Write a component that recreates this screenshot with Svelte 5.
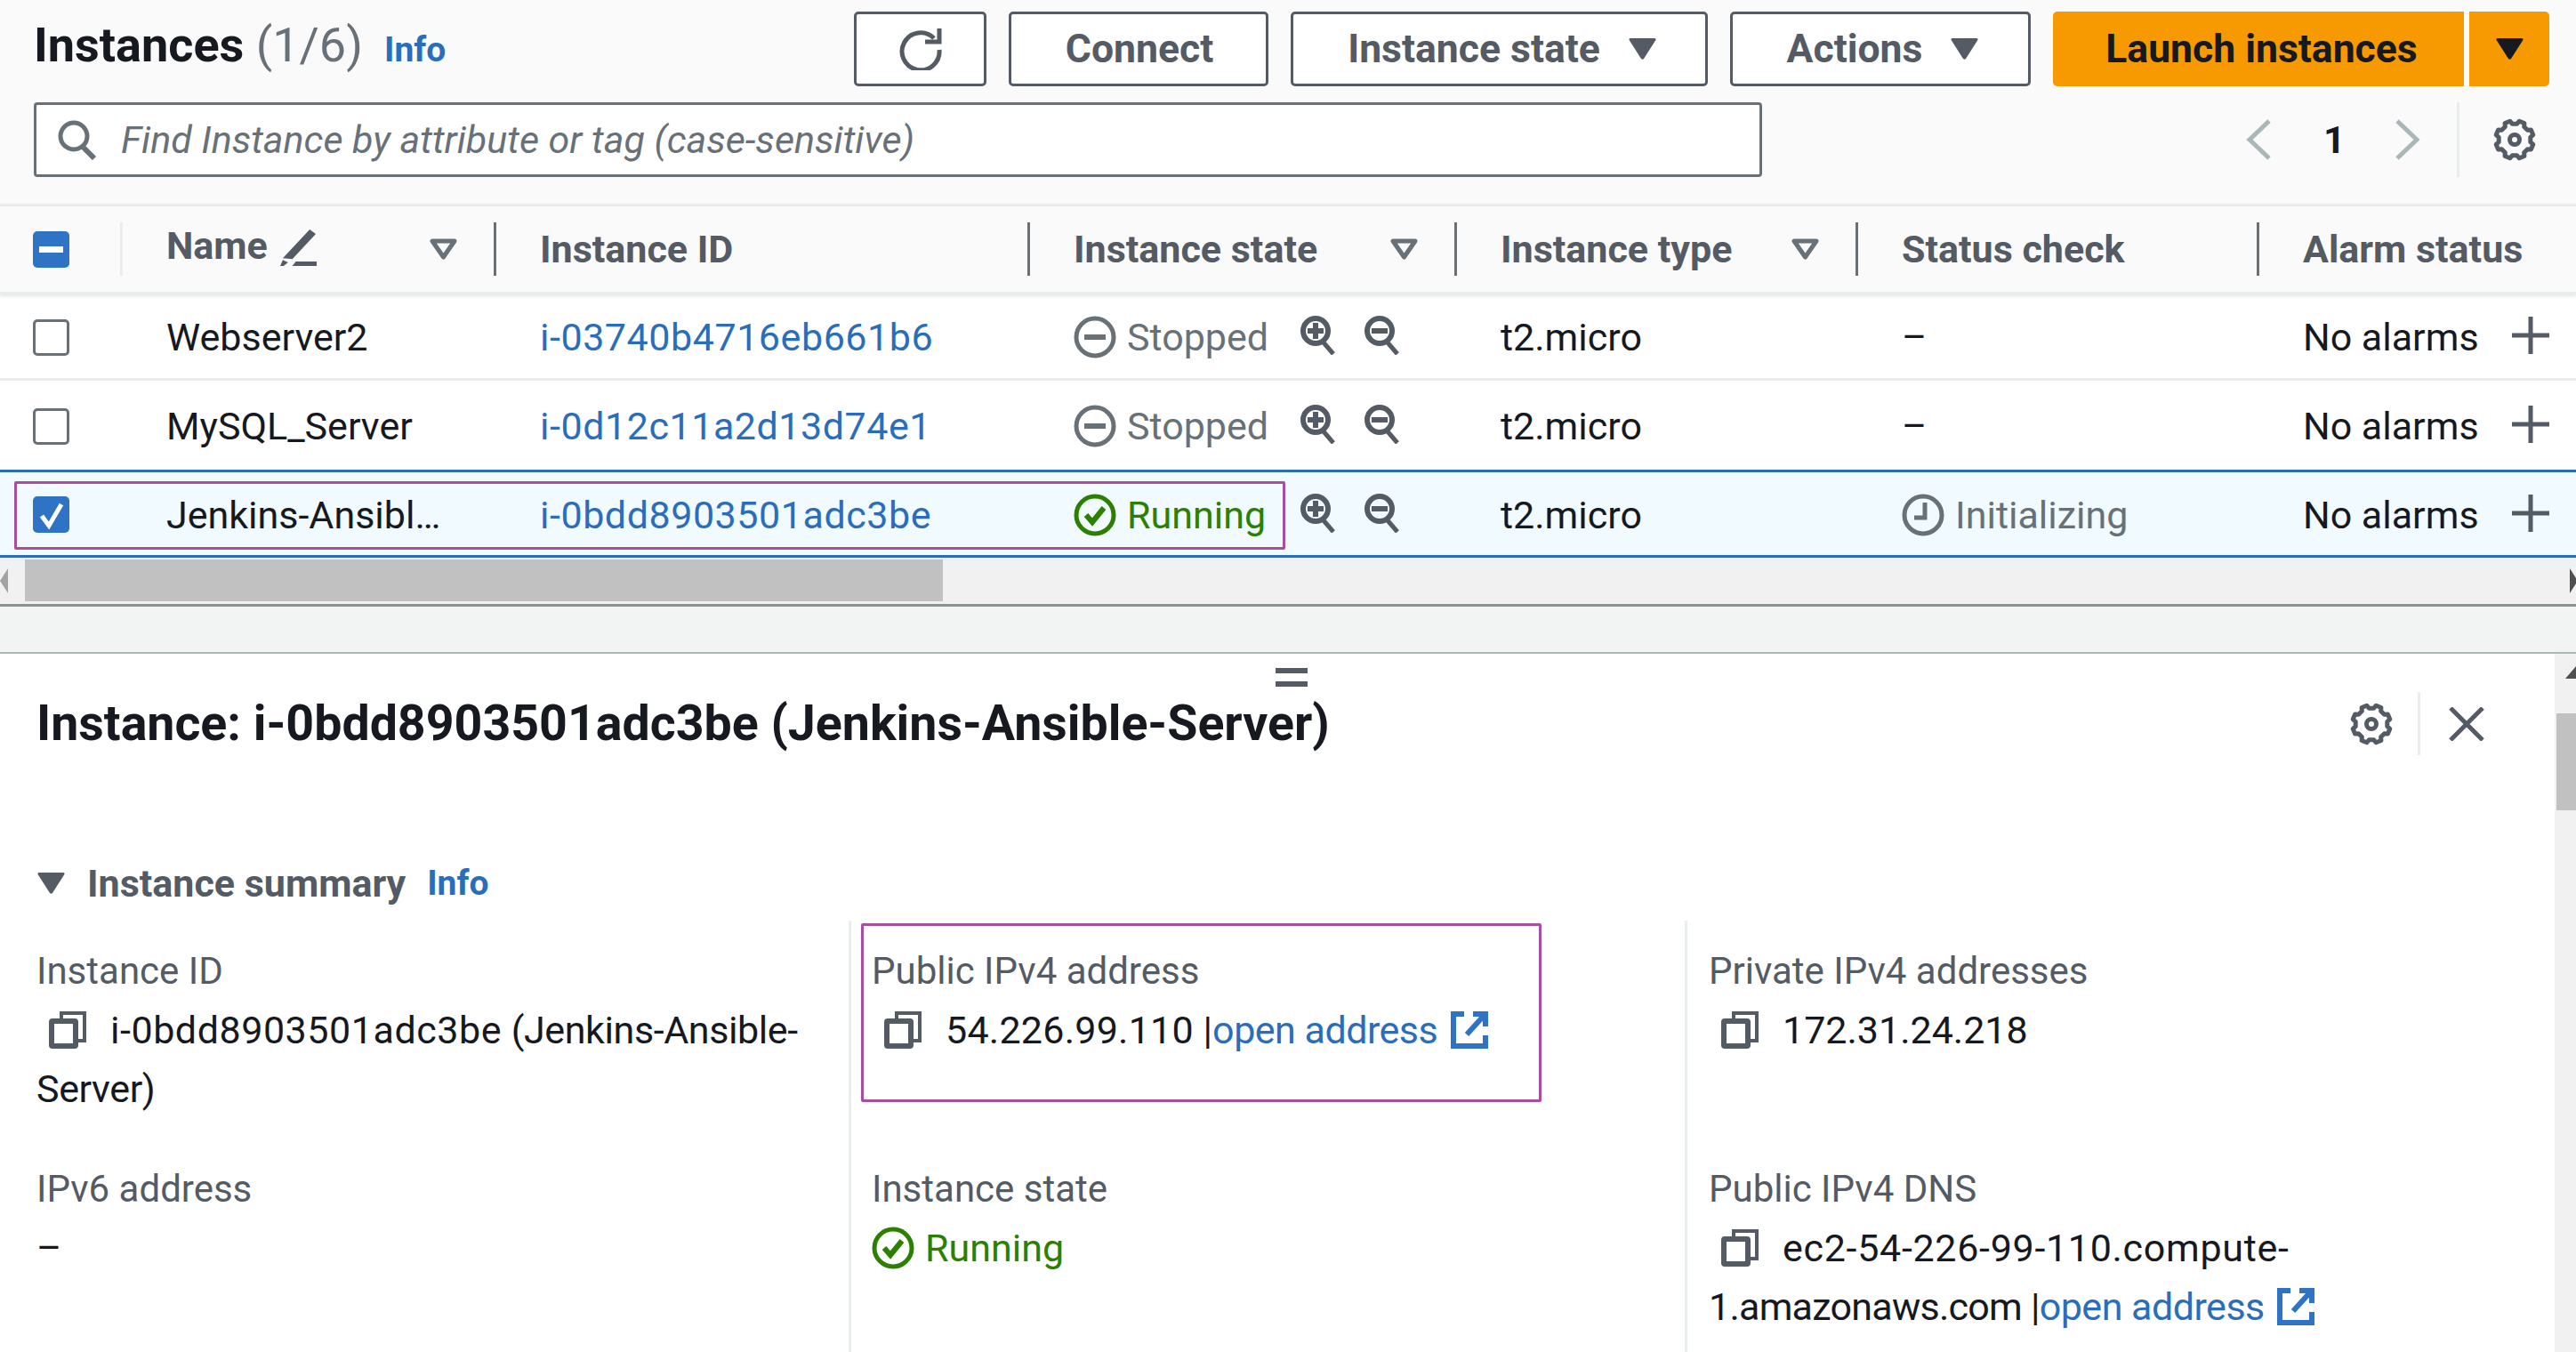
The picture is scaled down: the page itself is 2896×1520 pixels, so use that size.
<script>
  const gearPath = (() => {
    const cx = 24, cy = 24, n = 8;
    const pts = [];
    for (let i = 0; i < n; i++) {
      const a = (i * 2 * Math.PI) / n - Math.PI / 8;
      const d = Math.PI / n;
      [[18, -0.62 * d], [21.5, -0.36 * d], [21.5, 0.36 * d], [18, 0.62 * d]].forEach(([r, o]) => {
        pts.push(`${(cx + r * Math.cos(a + o)).toFixed(1)} ${(cy + r * Math.sin(a + o)).toFixed(1)}`);
      });
    }
    return 'M' + pts.join('L') + 'Z';
  })();
  const rows = [
    { name: 'Webserver2', id: 'i-03740b4716eb661b6', state: 'stopped', status: '–', cls: 'r1' },
    { name: 'MySQL_Server', id: 'i-0d12c11a2d13d74e1', state: 'stopped', status: '–', cls: 'r2' },
    { name: 'Jenkins-Ansibl…', id: 'i-0bdd8903501adc3be', state: 'running', status: 'init', cls: 'r3' }
  ];
</script>

{#snippet tri(cls)}
  <svg class={cls} viewBox="0 0 31 24" aria-hidden="true"><path d="M2 0H29Q31 0 30.4 2L17 23Q15.500 24.500 14 23L.6 2Q0 0 2 0Z" fill="currentColor" /></svg>
{/snippet}
{#snippet filter()}
  <svg class="filter" viewBox="0 0 31 24" aria-hidden="true"><path d="M3 3H28L15.500 21Z" fill="none" stroke="currentColor" stroke-width="5" stroke-linejoin="round" /></svg>
{/snippet}
{#snippet gear(cls)}
  <svg class={cls} viewBox="0 0 48 48" aria-hidden="true"><path d={gearPath} fill="none" stroke="currentColor" stroke-width="5" stroke-linejoin="round" /><circle cx="24" cy="24" r="5.500" fill="none" stroke="currentColor" stroke-width="5" /></svg>
{/snippet}
{#snippet copy()}
  <svg class="copy" viewBox="0 0 42 42" aria-hidden="true"><path d="M14 8V2H40V33H32" fill="none" stroke="currentColor" stroke-width="4" /><rect x="3" y="11" width="27" height="28" fill="none" stroke="currentColor" stroke-width="6" rx="1" /></svg>
{/snippet}
{#snippet ext()}
  <svg class="ext" viewBox="0 0 42 42" aria-hidden="true"><path d="M15 3H3V39H39V27" fill="none" stroke="currentColor" stroke-width="6" /><path d="M25 0H42V17H36V6H25Z" fill="currentColor" /><path d="M37 5L18 26" fill="none" stroke="currentColor" stroke-width="6" /></svg>
{/snippet}
{#snippet running()}
  <svg class="state-ic" viewBox="0 0 48 48" aria-hidden="true"><circle cx="24" cy="24" r="21" fill="none" stroke="currentColor" stroke-width="5" /><path d="M14 24L21 32L34 16" fill="none" stroke="currentColor" stroke-width="6" /></svg>
{/snippet}
{#snippet stopped()}
  <svg class="state-ic" viewBox="0 0 48 48" aria-hidden="true"><circle cx="24" cy="24" r="21" fill="none" stroke="currentColor" stroke-width="5" /><path d="M12 24H36" stroke="currentColor" stroke-width="6" /></svg>
{/snippet}
{#snippet clock()}
  <svg class="state-ic" viewBox="0 0 48 48" aria-hidden="true"><circle cx="24" cy="24" r="21" fill="none" stroke="currentColor" stroke-width="5" /><path d="M26 10V27H14" fill="none" stroke="currentColor" stroke-width="5" /></svg>
{/snippet}
{#snippet mag(plus)}
  <svg class="mag" viewBox="0 0 44 44" aria-hidden="true"><circle cx="18" cy="17" r="14" fill="none" stroke="currentColor" stroke-width="6" /><path d="M26 29L38 43" stroke="currentColor" stroke-width="5" /><path d="M9 17H27" stroke="currentColor" stroke-width="6" />{#if plus}<path d="M18 8V26" stroke="currentColor" stroke-width="6" />{/if}</svg>
{/snippet}

<div class="page">
  <section class="top">
    <div class="bar">
      <h1>Instances <span class="count">(1/6)</span><a class="info">Info</a></h1>
      <div class="actions">
        <button class="btn refresh" aria-label="Refresh">
          <svg viewBox="0 0 48 48" aria-hidden="true"><path d="M39 12A21 21 0 1 0 45 25" fill="none" stroke="currentColor" stroke-width="5" /><path d="M29 16H45V1" fill="none" stroke="currentColor" stroke-width="5" /></svg>
        </button>
        <button class="btn connect">Connect</button>
        <button class="btn state">Instance state {@render tri('caret')}</button>
        <button class="btn act">Actions {@render tri('caret')}</button>
        <div class="launch">
          <button class="primary main">Launch instances</button>
          <button class="primary drop" aria-label="More">{@render tri('caret')}</button>
        </div>
      </div>
    </div>
    <div class="bar second">
      <div class="search">
        <svg class="lens" viewBox="0 0 46 46" aria-hidden="true"><circle cx="19" cy="19" r="15" fill="none" stroke="currentColor" stroke-width="5" /><path d="M29 31L42 44" stroke="currentColor" stroke-width="6" /></svg>
        <span>Find Instance by attribute or tag (case-sensitive)</span>
      </div>
      <div class="pager">
        <svg class="chev" viewBox="0 0 28 46" aria-hidden="true"><path d="M26 2L4 23L26 44" fill="none" stroke="currentColor" stroke-width="5" /></svg>
        <b>1</b>
        <svg class="chev" viewBox="0 0 28 46" aria-hidden="true"><path d="M2 2L24 23L2 44" fill="none" stroke="currentColor" stroke-width="5" /></svg>
      </div>
      <div class="pref">{@render gear('gear')}</div>
    </div>
  </section>

  <section class="table">
    <div class="grid head">
      <div class="c0"><span class="check on"><i class="dash"></i></span></div>
      <div class="c1">
        <span class="hname">Name</span>
        <svg class="pencil" viewBox="0 0 42 42" aria-hidden="true"><path d="M34 0L41 5L14 34L3 33Z" fill="currentColor" /><path d="M0 42L3 35L9 38L4 42Z" fill="currentColor" /><path d="M18 37H42V42H14Z" fill="currentColor" /></svg>
        {@render filter()}
      </div>
      <div class="c2">Instance ID</div>
      <div class="c3">Instance state {@render filter()}</div>
      <div class="c4">Instance type {@render filter()}</div>
      <div class="c5">Status check</div>
      <div class="c6">Alarm status</div>
    </div>
    {#each rows as row}
      <div class="grid row {row.cls}">
        <div class="c0">
          {#if row.cls === 'r3'}
            <span class="check on"><svg viewBox="0 0 40 40" aria-hidden="true"><path d="M9 21L17 32L31 8" fill="none" stroke="#fff" stroke-width="5" /></svg></span>
          {:else}
            <span class="check"></span>
          {/if}
        </div>
        <div class="c1">{row.name}</div>
        <div class="c2"><a class="wide">{row.id}</a></div>
        <div class="c3 cellstate">
          {#if row.state === 'running'}
            <span class="st run">{@render running()}Running</span>
          {:else}
            <span class="st stop">{@render stopped()}Stopped</span>
          {/if}
          <span class="mags">{@render mag(true)}{@render mag(false)}</span>
        </div>
        <div class="c4">t2.micro</div>
        <div class="c5">
          {#if row.status === 'init'}
            <span class="st stop init">{@render clock()}Initializing</span>
          {:else}
            –
          {/if}
        </div>
        <div class="c6 alarm">
          <span>No alarms</span>
          <svg class="plus" viewBox="0 0 42 42" aria-hidden="true"><path d="M21 0V42M0 21H42" stroke="currentColor" stroke-width="5" /></svg>
        </div>
      </div>
    {/each}
    <div class="hl hl-row"></div>
    <div class="hscroll">
      <svg class="arrow-l" viewBox="0 0 9 28" aria-hidden="true"><path d="M9 0V28L0 14Z" fill="#a3a3a3" /></svg>
      <div class="thumb"></div>
      <svg class="arrow-r" viewBox="0 0 9 28" aria-hidden="true"><path d="M0 0V28L9 14Z" fill="#505050" /></svg>
    </div>
  </section>

  <div class="band"></div>

  <section class="panel">
    <div class="handle"></div>
    <div class="pmain">
      <div class="ptitle">
        <h2>Instance: i-0bdd8903501adc3be (Jenkins-Ansible-Server)</h2>
        <div class="ptools">
          {@render gear('gear')}
          <span class="pdiv"></span>
          <svg class="close" viewBox="0 0 40 38" aria-hidden="true"><path d="M2 1L38 37M38 1L2 37" stroke="currentColor" stroke-width="5" /></svg>
        </div>
      </div>
      <div class="summary">
        {@render tri('sumtri')}
        <h3>Instance summary</h3>
        <a class="info small">Info</a>
      </div>
      <div class="cols">
        <div class="col c-a">
          <div class="field">
            <div class="label">Instance ID</div>
            <div class="value">{@render copy()}<span class="wide">i-0bdd8903501adc3be</span> <span class="tight">(Jenkins-Ansible-Server)</span></div>
          </div>
          <div class="field">
            <div class="label">IPv6 address</div>
            <div class="value">–</div>
          </div>
        </div>
        <div class="col c-b">
          <div class="hl hl-ip"></div>
          <div class="field">
            <div class="label">Public IPv4 address</div>
            <div class="value">{@render copy()}<span class="ip">54.226.99.110</span> |<a class="open">open address</a> {@render ext()}</div>
          </div>
          <div class="field">
            <div class="label">Instance state</div>
            <div class="value"><span class="st run">{@render running()}Running</span></div>
          </div>
        </div>
        <div class="col c-c">
          <div class="field">
            <div class="label">Private IPv4 addresses</div>
            <div class="value">{@render copy()}172.31.24.218</div>
          </div>
          <div class="field">
            <div class="label">Public IPv4 DNS</div>
            <div class="value">{@render copy()}<span class="wider">ec2-54-226-99-110.compute-</span><span class="tighter">1.amazonaws.com |</span><a class="open">open address</a> {@render ext()}</div>
          </div>
        </div>
      </div>
    </div>
    <div class="vscroll">
      <svg class="arrow-u" viewBox="0 0 24 14" aria-hidden="true"><path d="M12 0L24 14H0Z" fill="#505050" /></svg>
      <div class="vthumb"></div>
    </div>
  </section>
</div>

<style>
  :global(body) { margin: 0; background: #fafafa; }
  .page {
    position: relative;
    width: 2896px;
    height: 1520px;
    overflow: hidden;
    font-family: Roboto, "Noto Sans", sans-serif;
    font-size: 43px;
    color: #16191f;
    background: #fafafa;
  }
  a { color: #2a6ebb; }
  svg { display: block; flex: none; }
  .wide { letter-spacing: 0.55px; }
  .ip { letter-spacing: 0.25px; }
  .tight { letter-spacing: -0.4px; }
  .wider { letter-spacing: 0.7px; }
  .tighter { letter-spacing: -0.75px; }
  .open { letter-spacing: -0.5px; }

  .top { height: 229px; padding: 13px 30px 0 38px; box-sizing: border-box; }
  .bar { display: flex; align-items: center; height: 84px; }
  .bar.second { margin-top: 18px; }
  h1 { margin: 0; font-size: 54px; font-weight: 700; line-height: 78px; margin-top: -4px; white-space: nowrap; }
  .count { font-weight: 400; color: #687078; }
  .info { font-size: 39px; font-weight: 700; margin-left: 24px; }
  .actions { margin-left: auto; display: flex; gap: 25px; }
  .btn {
    height: 84px; box-sizing: border-box; border: 3px solid #545b64; border-radius: 5px;
    background: #fff; color: #545b64; font: 700 44.500px Roboto, "Noto Sans", sans-serif;
    display: flex; align-items: center; justify-content: center; gap: 32px; padding: 0;
  }
  .refresh { width: 149px; }
  .refresh svg { width: 48px; height: 48px; }
  .connect { width: 292px; padding-left: 2px; }
  .state { width: 469px; padding-left: 6px; }
  .act { width: 338px; padding-left: 5px; }
  .caret { width: 31px; height: 24px; }
  .launch { display: flex; gap: 6px; }
  .primary { height: 84px; border: 0; background: #f79900; color: #16191f; font: 700 44.500px Roboto, "Noto Sans", sans-serif; padding: 0; display: flex; align-items: center; justify-content: center; }
  .main { width: 462px; border-radius: 5px 0 0 5px; padding-left: 7px; }
  .drop { width: 90px; border-radius: 0 5px 5px 0; }

  .search {
    width: 1943px; height: 84px; box-sizing: border-box; border: 3px solid #687078; border-radius: 4px; background: #fff;
    display: flex; align-items: center; padding-left: 23px; gap: 26px; color: #687078; font-style: italic;
  }
  .lens { width: 46px; height: 46px; }
  .pager { margin-left: auto; display: flex; align-items: center; color: #aab7b8; padding-right: 41px; }
  .pager b { color: #16191f; font-weight: 700; width: 20px; text-align: center; margin: 0 61px 0 59px; }
  .chev { width: 28px; height: 46px; }
  .pref { height: 84px; border-left: 3px solid #eaeded; display: flex; align-items: center; padding-left: 38px; padding-right: 15px; color: #545b64; }
  .gear { width: 48px; height: 48px; }

  .table { position: relative; border-top: 3px solid #eaeded; }
  .grid { display: grid; grid-template-columns: 137px 420px 600px 480px 451px 451px 357px; box-sizing: border-box; }
  .grid > div { display: flex; align-items: center; padding-left: 50px; box-sizing: border-box; white-space: nowrap; min-width: 0; }
  .grid > .c0 { padding-left: 37px; }
  .row > div { padding-top: 2px; }
  .head { height: 99px; border-bottom: 3px solid #eaeded; box-shadow: 0 2px 4px rgba(0,28,36,.12); position: relative; color: #545b64; font-weight: 700; background: #fafafa; }
  .head > div { position: relative; }
  .head > div:not(:first-child)::before {
    content: ""; position: absolute; left: -2px; top: 18px; height: 60px; width: 3px; background: #687078;
  }
  .head > div:nth-child(2)::before { background: #eaeded; }
  .hname { margin-top: -8px; }
  .pencil { width: 41px; height: 41px; margin-left: 14px; margin-top: -4px; }
  .filter { width: 31px; height: 24px; margin-left: auto; margin-right: 43px; color: #687078; }
  .r1, .r2, .r3 { background: #fff; }
  .r1 { height: 97px; border-bottom: 3px solid #eaeded; }
  .r2 { height: 100px; }
  .r3 { height: 99px; background: #f1faff; border-top: 3px solid #2a6ebb; border-bottom: 3px solid #2a6ebb; }
  .check { width: 41px; height: 41px; box-sizing: border-box; border: 3px solid #687078; border-radius: 5px; background: #fff; display: flex; align-items: center; justify-content: center; }
  .check.on { border: 0; background: #2e73c4; }
  .check svg { width: 40px; height: 40px; }
  .dash { width: 27px; height: 7px; background: #fff; }
  .c2 a { color: #2a6ebb; }
  .st { display: inline-flex; align-items: center; gap: 12px; }
  .cellstate .st { width: 254px; }
  .run { color: #2b8000; }
  .stop { color: #687078; }
  .state-ic { width: 48px; height: 48px; }
  .mags { display: flex; gap: 28px; color: #545b64; margin-top: -4px; }
  .mag { width: 44px; height: 44px; }
  .plus { width: 42px; height: 42px; color: #545b64; margin-top: -4px; margin-left: auto; margin-right: 30px; }

  .hl { position: absolute; box-sizing: border-box; border: 3px solid #a84ea0; border-radius: 2px; pointer-events: none; }
  .hl-row { left: 16px; top: 309px; width: 1429px; height: 77px; }

  .hscroll { position: relative; height: 52px; background: #f1f1f1; border-bottom: 3px solid #879596; }
  .thumb { position: absolute; left: 28px; top: 2px; width: 1032px; height: 47px; background: #c1c1c1; }
  .arrow-l { position: absolute; left: 0; top: 12px; width: 9px; height: 28px; }
  .arrow-r { position: absolute; right: -2px; top: 12px; width: 9px; height: 28px; }

  .band { height: 51px; background: #f2f3f3; border-bottom: 2px solid #aab7b8; box-sizing: content-box; }

  .panel { position: relative; display: flex; background: #fff; height: 785px; }
  .handle { position: absolute; left: 1434px; top: 16px; width: 36px; height: 9px; border-top: 6px solid #545b64; border-bottom: 6px solid #545b64; }
  .pmain { width: 2872px; flex: none; }
  .vscroll { position: relative; flex: 1; background: #f1f1f1; }
  .arrow-u { position: absolute; left: 12px; top: 14px; width: 24px; height: 14px; }
  .vthumb { position: absolute; left: 2px; top: 67px; right: 0; height: 109px; background: #c1c1c1; }

  .ptitle { height: 157px; display: flex; align-items: center; padding-left: 41px; padding-right: 79px; box-sizing: border-box; }
  h2 { margin: 0; font-size: 55.500px; font-weight: 700; white-space: nowrap; color: #16191f; }
  .ptools { margin-left: auto; display: flex; align-items: center; color: #545b64; }
  .pdiv { width: 3px; height: 71px; background: #eaeded; margin: 0 32px 0 28px; }
  .close { width: 40px; height: 38px; }
  .summary { height: 58px; margin-top: 72px; display: flex; align-items: center; padding-left: 42px; }
  .sumtri { width: 31px; height: 24px; color: #545b64; }
  h3 { margin: 0 0 0 25px; font-size: 43px; font-weight: 700; color: #545b64; white-space: nowrap; }

  .cols { display: grid; grid-template-columns: 954px 940px 978px; margin-top: 13px; }
  .col { box-sizing: border-box; padding-top: 24px; height: 600px; position: relative; display: grid; grid-template-rows: 245px 245px; align-content: start; }
  .c-a { padding-left: 41px; padding-right: 20px; }
  .c-b { border-left: 3px solid #eaeded; padding-left: 23px; padding-right: 40px; }
  .c-c { border-left: 3px solid #eaeded; padding-left: 24px; padding-right: 200px; }
  .label { line-height: 66px; color: #545b64; font-size: 42px; }
  .value { line-height: 66px; color: #16191f; }
  .value .copy { display: inline-block; vertical-align: -6px; margin: 0 27px 0 14px; width: 42px; height: 42px; color: #545b64; }
  .value .ext { display: inline-block; vertical-align: -6px; margin-left: 4px; width: 42px; height: 42px; color: #2e73c4; }
  .hl-ip { left: 11px; top: 3px; width: 765px; height: 201px; }
</style>
